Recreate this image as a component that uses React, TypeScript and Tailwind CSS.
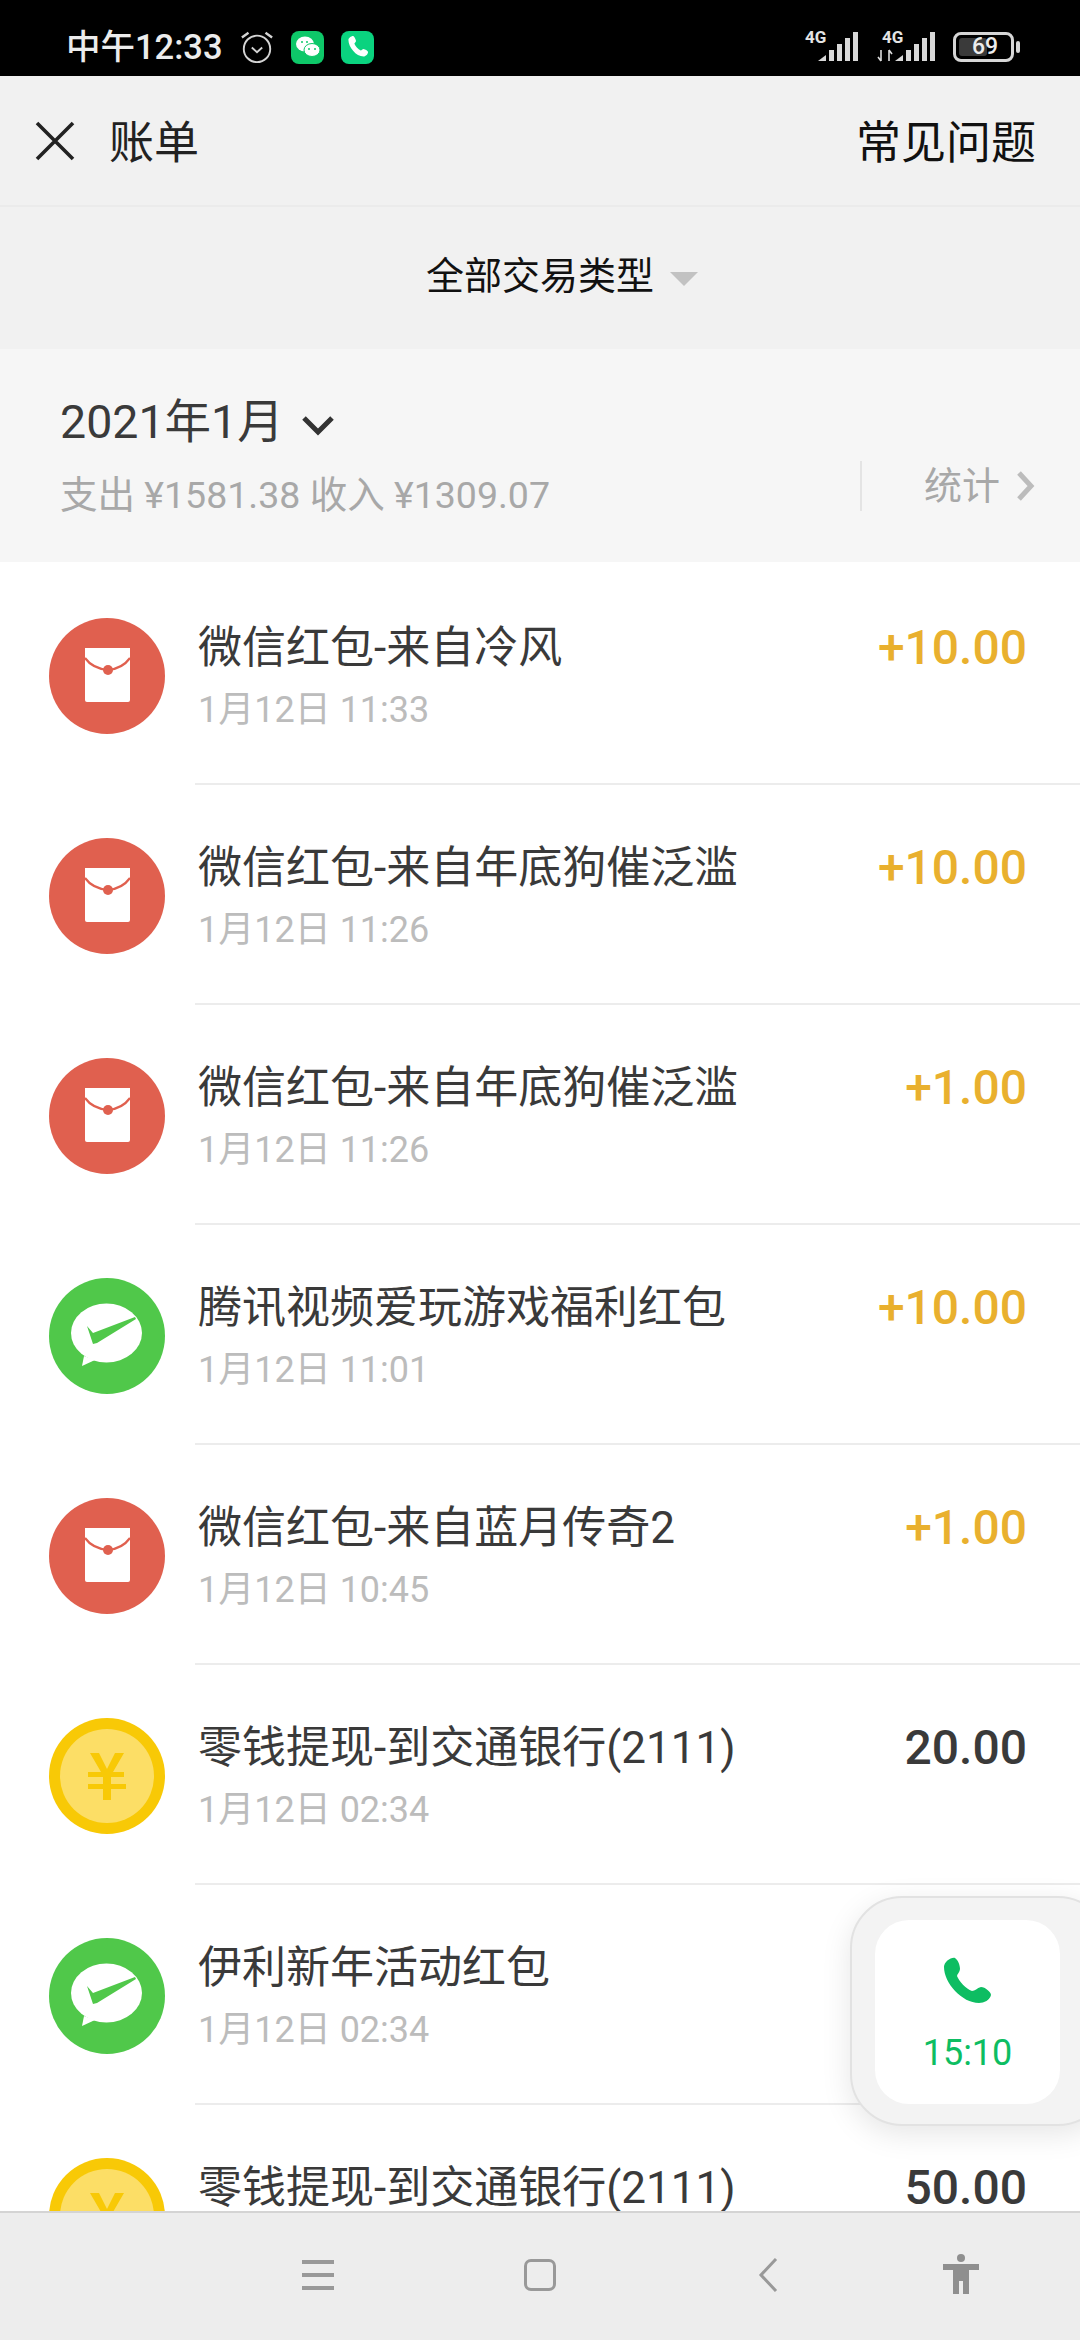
import React from "react";

const FONT = "font-['Roboto','Noto_Sans_CJK_SC',sans-serif]";

function RedIcon() {
  return (
    <svg width="116" height="116" viewBox="0 0 116 116" className="shrink-0">
      <circle cx="58" cy="58" r="58" fill="#e0604f" />
      <path d="M36 30h45v52a2 2 0 0 1-2 2H38a2 2 0 0 1-2-2z" fill="#fff" />
      <path d="M36 40c5 7 13 11 23 12c10-1 17-5 22-12" fill="none" stroke="#e0604f" strokeWidth="2.2" />
      <circle cx="59" cy="52" r="5" fill="#e0604f" />
    </svg>
  );
}

function GreenIcon() {
  return (
    <svg width="116" height="116" viewBox="0 0 116 116" className="shrink-0">
      <circle cx="58" cy="58" r="58" fill="#50c84a" />
      <ellipse cx="57.5" cy="55" rx="35.5" ry="29.5" fill="#fff" />
      <path d="M35 78l-2 10l13-6z" fill="#fff" />
      <path d="M38 48l6 18l4-1l39-24l-1-2l-42 16z" fill="#50c84a" />
    </svg>
  );
}

function CoinIcon() {
  return (
    <svg width="116" height="116" viewBox="0 0 116 116" className="shrink-0">
      <circle cx="58" cy="58" r="58" fill="#f8c906" />
      <circle cx="58" cy="58" r="47" fill="#fcde66" />
      <path d="M41 35h9l8 16l8-16h9l-11 19h11v5H62v7h15v5H62v11h-8V71H39v-5h15v-7H39v-5h13z" fill="#f8c906" />
    </svg>
  );
}

function Signal({ arrows }: { arrows?: boolean }) {
  return (
    <div className="relative w-[54px] h-[30px]">
      <span className="absolute left-[0px] top-[-4px] text-[17px] leading-[18px] font-bold text-[#e4e4e4] font-['Roboto',sans-serif]">4G</span>
      <svg width="54" height="30" viewBox="0 0 54 30" className="absolute inset-0 overflow-visible">
        {arrows && <path d="M-1 18v11M-4 25l3 4M7 29V18M7 18l3 4" stroke="#ddd" strokeWidth="1.6" fill="none" />}
        <path d="M13 29l8-6v6z" fill="#d8d8d8" />
        <rect x="24" y="18" width="5" height="11" fill="#d8d8d8" />
        <rect x="32" y="12" width="5" height="17" fill="#d8d8d8" />
        <rect x="40" y="6" width="5" height="23" fill="#d8d8d8" />
        <rect x="48" y="0" width="5" height="29" fill="#d8d8d8" />
      </svg>
    </div>
  );
}

function StatusBar() {
  return (
    <div className="h-[76px] shrink-0 bg-black flex items-center pl-[66px] pr-[60px] pt-[18px]">
      <span className="text-[34.5px] leading-[40px] font-medium text-[#ececec] w-[172px] whitespace-nowrap">中午12:33</span>
      <svg width="34" height="34" viewBox="0 0 36 36" className="ml-[2px]" fill="none" stroke="#d4d4d4">
        <circle cx="18" cy="20" r="14" strokeWidth="2" />
        <path d="M12.5 18.5l5.5 5l5.5-5" strokeWidth="2" />
        <path d="M2 8l7-5M34 8l-7-5" strokeWidth="2.5" />
      </svg>
      <div className="ml-[17px] w-[33px] h-[33px] rounded-[8px] bg-[#0ec869] flex items-center justify-center">
        <svg width="26" height="24" viewBox="0 0 26 24">
          <ellipse cx="10" cy="9" rx="9" ry="7.5" fill="#fff" />
          <ellipse cx="17" cy="15" rx="8" ry="6.5" fill="#fff" stroke="#0ec869" strokeWidth="1" />
          <circle cx="7" cy="7" r="1" fill="#0ec869" />
          <circle cx="12" cy="7" r="1" fill="#0ec869" />
          <circle cx="14" cy="14" r="1" fill="#0ec869" />
          <circle cx="20" cy="14" r="1" fill="#0ec869" />
        </svg>
      </div>
      <div className="ml-[17px] w-[33px] h-[33px] rounded-[8px] bg-[#0ad37f] flex items-center justify-center">
        <svg width="24" height="24" viewBox="0 0 60 60">
          <path d="M6 12c0-4 9-11 13-9c3 3 6 9 6 12c0 3-4 5-4 7c2 6 9 13 16 17c2 0 4-4 7-4c4 1 10 4 11 7c1 5-6 12-11 12C25 54 6 30 6 12z" fill="#fff" />
        </svg>
      </div>
      <div className="ml-auto flex items-center">
        <Signal />
        <div className="w-[23px]" />
        <Signal arrows />
        <div className="ml-[17px] w-[61px] h-[30px] rounded-[8px] border-[3px] border-[#d6d6d6] relative flex items-center justify-center pl-[3px]">
          <div className="absolute left-[3px] top-[3px] bottom-[3px] w-[28px] rounded-[3px] bg-[#3a3a3a]" />
          <span className="relative text-[23px] leading-[24px] font-medium text-[#ececec]">69</span>
        </div>
        <div className="ml-[2px] w-[4px] h-[12px] rounded-[2px] bg-[#d6d6d6]" />
      </div>
    </div>
  );
}

type Row = { title: string; date: string; amount?: string; kind: "red" | "green" | "coin"; income?: boolean };

const rows: Row[] = [
  { title: "微信红包-来自冷风", date: "1月12日 11:33", amount: "+10.00", kind: "red", income: true },
  { title: "微信红包-来自年底狗催泛滥", date: "1月12日 11:26", amount: "+10.00", kind: "red", income: true },
  { title: "微信红包-来自年底狗催泛滥", date: "1月12日 11:26", amount: "+1.00", kind: "red", income: true },
  { title: "腾讯视频爱玩游戏福利红包", date: "1月12日 11:01", amount: "+10.00", kind: "green", income: true },
  { title: "微信红包-来自蓝月传奇2", date: "1月12日 10:45", amount: "+1.00", kind: "red", income: true },
  { title: "零钱提现-到交通银行(2111)", date: "1月12日 02:34", amount: "20.00", kind: "coin" },
  { title: "伊利新年活动红包", date: "1月12日 02:34", kind: "green" },
  { title: "零钱提现-到交通银行(2111)", date: "1月12日 02:34", amount: "50.00", kind: "coin" },
];

function BillRow({ row }: { row: Row }) {
  return (
    <div className="h-[220px] shrink-0 flex pl-[49px]">
      <div className="pt-[53px] w-[146px] shrink-0">
        {row.kind === "red" && <RedIcon />}
        {row.kind === "green" && <GreenIcon />}
        {row.kind === "coin" && <CoinIcon />}
      </div>
      <div className="flex-1 border-b-2 border-[#ececec] flex justify-between pr-[53px] pt-[54px]">
        <div className="pl-[3px]">
          <div className="text-[44px] leading-[58px] text-[#3a3a3a] whitespace-nowrap">{row.title}</div>
          <div className="text-[36px] leading-[42px] mt-[12px] text-[#bcbcbc] whitespace-nowrap">{row.date}</div>
        </div>
        {row.amount && (
          <div className={`text-[48px] leading-[58px] font-medium whitespace-nowrap ${row.income ? "text-[#e9b02e]" : "text-[#3a3a3a]"}`}>
            {row.amount}
          </div>
        )}
      </div>
    </div>
  );
}

export default function App() {
  return (
    <div className={`relative w-[1080px] h-[2340px] overflow-hidden flex flex-col bg-white ${FONT}`}>
      <StatusBar />

      <div className="h-[131px] shrink-0 bg-[#f1f1f1] border-b-2 border-[#ebebeb] flex items-center pl-[35px] pr-[44px] pt-[6px]">
        <svg width="40" height="40" viewBox="0 0 40 40" stroke="#222" strokeWidth="3.6" fill="none" className="-mt-[6px]">
          <path d="M2 2l36 36M38 2L2 38" />
        </svg>
        <span className="ml-[34px] text-[45px] leading-[56px] text-[#222]">账单</span>
        <span className="ml-auto text-[45px] leading-[56px] text-[#111]">常见问题</span>
      </div>

      <div className="h-[142px] shrink-0 bg-[#f1f1f1] flex items-center justify-center pl-[44px] pb-[4px]">
        <span className="text-[38px] leading-[50px] text-[#111]">全部交易类型</span>
        <div className="ml-[16px] mt-[6px] w-0 h-0 border-l-[14px] border-r-[14px] border-t-[14px] border-l-transparent border-r-transparent border-t-[#c2c2c2]" />
      </div>

      <div className="h-[213px] shrink-0 bg-[#f6f6f6] flex pl-[60px] pr-[44px]">
        <div className="pt-[44px]">
          <div className="flex items-center">
            <span className="text-[46.5px] leading-[58px] text-[#3a3a3a]">2021年1月</span>
            <svg width="32" height="22" viewBox="0 0 32 22" className="ml-[18px] mt-[8px]" fill="none" stroke="#333" strokeWidth="5">
              <path d="M2 3l14 14L30 3" />
            </svg>
          </div>
          <div className="mt-[21px] text-[37.5px] leading-[46px] text-[#a8a8a8] whitespace-nowrap">支出 ¥1581.38 收入 ¥1309.07</div>
        </div>
        <div className="ml-auto mt-[112px] h-[50px] flex items-center">
          <div className="w-[2px] h-[50px] bg-[#e4e4e4] mr-[62px]" />
          <span className="text-[38px] leading-[46px] text-[#a8a8a8]">统计</span>
          <svg width="20" height="32" viewBox="0 0 20 32" className="ml-[16px]" fill="none" stroke="#bcbcbc" strokeWidth="5">
            <path d="M3 3l12 13L3 29" />
          </svg>
        </div>
      </div>

      <div className="flex-1 min-h-0 overflow-hidden flex flex-col pt-[3px]">
        {rows.map((r, i) => (
          <BillRow key={i} row={r} />
        ))}
      </div>

      <div className="h-[129px] shrink-0 bg-[#ededed] border-t-2 border-[#d4d4d4] flex items-center pl-[302px] pb-[4px]">
        <div className="w-[32px] flex flex-col gap-[9px]">
          <div className="h-[4px] bg-[#999]" />
          <div className="h-[4px] bg-[#999]" />
          <div className="h-[4px] bg-[#999]" />
        </div>
        <div className="ml-[190px] w-[32px] h-[32px] rounded-[7px] border-[3px] border-[#999]" />
        <svg width="20" height="34" viewBox="0 0 20 34" className="ml-[202px]" fill="none" stroke="#999" strokeWidth="3">
          <path d="M18 1L3 17l15 16" />
        </svg>
        <svg width="36" height="40" viewBox="0 0 36 40" className="ml-[165px] mb-[2px]" fill="#8f8f8f">
          <ellipse cx="18" cy="4" rx="4" ry="4" />
          <path d="M0 10h36v6H26v24h-6V27h-4v13h-6V16H0z" />
        </svg>
      </div>

      <div className="absolute left-[850px] top-[1896px] w-[260px] h-[230px] rounded-[52px] bg-[#f3f3f3] border-2 border-[#e2e2e2] shadow-[0_8px_30px_rgba(0,0,0,0.10)] pl-[23px] pt-[22px]">
        <div className="w-[185px] h-[184px] rounded-[34px] bg-white flex flex-col items-center pt-[37px]">
          <svg width="52" height="52" viewBox="0 0 52 52">
            <path d="M2 10c0-5 7-10 11-9c3 2 5 7 5 11c0 3-3 5-3 7c2 5 9 13 15 15c3 0 5-3 9-4c4 0 10 5 10 8c-1 5-7 8-12 8C20 46 2 26 2 10z" fill="#0dbd62" />
          </svg>
          <span className="mt-[23px] text-[36px] leading-[42px] text-[#0dbd62]">15:10</span>
        </div>
      </div>
    </div>
  );
}
